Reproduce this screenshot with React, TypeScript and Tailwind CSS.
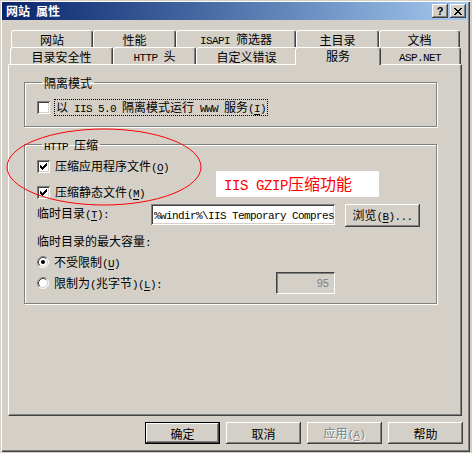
import React from 'react';
import clsx from 'clsx';

const cjkRe = /[\u2e80-\u9fff\u3000-\u303f\uff00-\uffef]/;

const cjkSm = "font-['Noto_Sans_CJK_SC',sans-serif] text-[12px]";
const monoSm = "font-['Liberation_Mono',monospace] text-[11px] tracking-[-0.6px]";
const cjkBig = "font-['Noto_Sans_CJK_SC',sans-serif] text-[16px]";
const monoBig = "font-['Liberation_Mono',monospace] text-[14px] tracking-[-0.4px]";

// "&X" underlines X, like a Windows resource string
function Txt({ t, big }: { t: string; big?: boolean }) {
  const runs: { s: string; cjk: boolean; u: boolean }[] = [];
  for (let i = 0; i < t.length; i++) {
    let c = t[i];
    let u = false;
    if (c === '&' && i + 1 < t.length) {
      i++;
      c = t[i];
      u = true;
    }
    const cjk = cjkRe.test(c);
    const last = runs[runs.length - 1];
    if (last && last.cjk === cjk && last.u === u) last.s += c;
    else runs.push({ s: c, cjk, u });
  }
  return (
    <span className="whitespace-pre">
      {runs.map((r, i) => (
        <span
          key={i}
          className={clsx(
            r.cjk ? (big ? cjkBig : cjkSm) : big ? monoBig : monoSm,
            r.u && 'underline underline-offset-[2px]'
          )}
        >
          {r.s}
        </span>
      ))}
    </span>
  );
}

const raised = 'shadow-[inset_-1px_-1px_0_#404040,inset_1px_1px_0_#ffffff,inset_-2px_-2px_0_#808080]';
const sunken = 'shadow-[inset_1px_1px_0_#808080,inset_-1px_-1px_0_#ffffff,inset_2px_2px_0_#404040,inset_-2px_-2px_0_#d4d0c8]';

function Check({ on }: { on?: boolean }) {
  return (
    <span className={`flex h-[13px] w-[13px] shrink-0 items-center justify-center bg-white ${sunken}`}>
      {on && (
        <svg width="7" height="7" viewBox="0 0 7 7" shapeRendering="crispEdges">
          {[2, 3, 4, 3, 2, 1, 0].map((y, x) => (
            <rect key={x} x={x} y={y} width="1" height="3" fill="#000" />
          ))}
        </svg>
      )}
    </span>
  );
}

function Radio({ on }: { on?: boolean }) {
  return (
    <svg width="12" height="12" viewBox="0 0 12 12" className="shrink-0">
      <circle cx="6" cy="6" r="5" fill="#fff" />
      <path d="M2.11 9.89 A5.5 5.5 0 0 1 9.89 2.11" stroke="#808080" fill="none" />
      <path d="M9.89 2.11 A5.5 5.5 0 0 1 2.11 9.89" stroke="#ffffff" fill="none" />
      <path d="M2.82 9.18 A4.5 4.5 0 0 1 9.18 2.82" stroke="#404040" fill="none" />
      <path d="M9.18 2.82 A4.5 4.5 0 0 1 2.82 9.18" stroke="#d4d0c8" fill="none" />
      {on && <circle cx="6" cy="6" r="2" fill="#000" />}
    </svg>
  );
}

function Btn({ t, def, off, w = 'w-[75px]', h = 'h-[22px]' }: { t: string; def?: boolean; off?: boolean; w?: string; h?: string }) {
  return (
    <div
      className={clsx(
        'flex shrink-0 items-center justify-center bg-[#d4d0c8]',
        w,
        h,
        def
          ? 'border border-black shadow-[inset_-1px_-1px_0_#404040,inset_1px_1px_0_#ffffff,inset_-2px_-2px_0_#808080]'
          : raised,
        off && 'text-[#808080] [text-shadow:1px_1px_0_#ffffff]'
      )}
    >
      <Txt t={t} />
    </div>
  );
}

const row1: [string, number][] = [
  ['网站', 82],
  ['性能', 83],
  ['ISAPI 筛选器', 120],
  ['主目录', 83],
  ['文档', 81],
];

const row2: [string, number, boolean][] = [
  ['目录安全性', 103, false],
  ['HTTP 头', 83, false],
  ['自定义错误', 101, false],
  ['服务', 82, true],
  ['ASP.NET', 82, false],
];

const tabEdge =
  'flex items-center justify-center rounded-t-[3px] border-t border-l border-r border-t-white border-l-white border-r-[#404040] shadow-[inset_-1px_0_0_#808080]';

function TitleBar() {
  return (
    <div className="flex h-[18px] shrink-0 items-center justify-between bg-linear-to-r from-[#0a246a] to-[#a6caf0] pl-[4px] pr-[2px]">
      <span className="font-bold text-white">
        <Txt t="网站 属性" />
      </span>
      <div className="flex gap-[2px]">
        <div className={`flex h-[14px] w-[16px] items-center justify-center bg-[#d4d0c8] ${raised}`}>
          <span className="font-['Liberation_Sans',sans-serif] text-[11px] font-bold leading-[11px]">?</span>
        </div>
        <div className={`flex h-[14px] w-[16px] items-center justify-center bg-[#d4d0c8] ${raised}`}>
          <svg width="8" height="7" viewBox="0 0 8 7" shapeRendering="crispEdges">
            {[
              [0, 0, 2], [6, 0, 2],
              [1, 1, 2], [5, 1, 2],
              [2, 2, 4],
              [3, 3, 2],
              [2, 4, 4],
              [1, 5, 2], [5, 5, 2],
              [0, 6, 2], [6, 6, 2],
            ].map(([x, y, w], i) => (
              <rect key={i} x={x} y={y} width={w} height="1" fill="#000" />
            ))}
          </svg>
        </div>
      </div>
    </div>
  );
}

const groupCls = 'w-[413px] border border-[#808080] px-[12px] shadow-[1px_1px_0_#ffffff,inset_1px_1px_0_#ffffff]';

export default function App() {
  return (
    <div className="h-[453px] w-[472px] bg-[#d4d0c8]">
      <div className="relative flex h-[452px] w-[470px] flex-col bg-[#d4d0c8] px-[2px] pt-[2px] leading-[14px] text-black shadow-[inset_1px_1px_0_#d4d0c8,inset_2px_2px_0_#ffffff,inset_-1px_-1px_0_#404040,inset_-2px_-2px_0_#808080]">
        <TitleBar />

        <div className="flex flex-col pl-[6px] pt-[10px]">
          <div className="flex h-[17px] pl-[3px]">
            {row1.map(([t, w]) => (
              <div key={t} className={`${tabEdge} pt-[1px]`} style={{ width: w }}>
                <Txt t={t} />
              </div>
            ))}
          </div>
          <div className="flex h-[17px] items-end pl-[2px]">
            {row2.map(([t, w, sel]) =>
              sel ? (
                <div
                  key={t}
                  className={`${tabEdge} relative z-10 -mx-[2px] -mb-px h-[18px] bg-[#d4d0c8] pb-[3px]`}
                  style={{ width: w + 4 }}
                >
                  <Txt t={t} />
                </div>
              ) : (
                <div key={t} className={`${tabEdge} h-[17px]`} style={{ width: w }}>
                  <Txt t={t} />
                </div>
              )
            )}
          </div>

          <div className="flex h-[352px] w-[454px] flex-col border border-t-white border-l-white border-r-[#404040] border-b-[#404040] pl-[15px] pt-[10px] shadow-[inset_-1px_-1px_0_#808080]">
            <fieldset className={`${groupCls} pb-[12px]`}>
              <legend className="ml-[5px] h-[14px] px-[2px] leading-[14px]">
                <Txt t="隔离模式" />
              </legend>
              <div className="mt-[11px] flex h-[14px] items-center gap-[4px]">
                <Check />
                <span className="border border-dotted border-black px-px leading-[12px]">
                  <Txt t="以 IIS 5.0 隔离模式运行 WWW 服务(&I)" />
                </span>
              </div>
            </fieldset>

            <fieldset className={`${groupCls} mt-[10px] pb-[9px]`}>
              <legend className="ml-[5px] h-[14px] px-[2px] leading-[14px]">
                <Txt t="HTTP 压缩" />
              </legend>
              <div className="mt-[8px] flex h-[14px] items-center gap-[5px]">
                <Check on />
                <Txt t="压缩应用程序文件(&O)" />
              </div>
              <div className="mt-[12px] flex h-[14px] items-center gap-[5px]">
                <Check on />
                <Txt t="压缩静态文件(&M)" />
              </div>

              <div className="mt-[5px] flex h-[23px] items-start">
                <span className="mt-[1px] w-[114px] shrink-0">
                  <Txt t="临时目录(&T):" />
                </span>
                <div className={`flex h-[21px] w-[184px] shrink-0 items-center overflow-hidden whitespace-nowrap bg-white pl-[3px] ${sunken}`}>
                  <Txt t={'%windir%\\IIS Temporary Compres'} />
                </div>
                <div className="ml-[10px]">
                  <Btn t="浏览(&B)..." h="h-[23px]" />
                </div>
              </div>

              <div className="mt-[6px] h-[14px]">
                <Txt t="临时目录的最大容量:" />
              </div>

              <div className="mt-[8px] flex h-[14px] items-center gap-[5px]">
                <Radio on />
                <Txt t="不受限制(&U)" />
              </div>

              <div className="mt-[3px] flex h-[22px] items-center">
                <div className="flex w-[239px] shrink-0 items-center gap-[5px]">
                  <Radio />
                  <Txt t="限制为(兆字节)(&L):" />
                </div>
                <div className="flex h-[22px] w-[59px] items-center justify-end border border-t-[#404040] border-l-[#404040] border-r-white border-b-white bg-[#d4d0c8] pr-[5px] shadow-[inset_1px_1px_0_#808080]">
                  <span className="font-['Liberation_Sans',sans-serif] text-[11px] text-[#808080]">95</span>
                </div>
              </div>
            </fieldset>
          </div>

          <div className="mt-[6px] flex w-[455px] justify-end gap-[6px]">
            <Btn t="确定" def />
            <Btn t="取消" />
            <Btn t="应用(&A)" off />
            <Btn t="帮助" />
          </div>
        </div>

        {/* red annotation drawn on top of the dialog */}
        <svg className="pointer-events-none absolute left-0 top-0" width="472" height="453">
          <ellipse cx="104" cy="167" rx="97" ry="38" fill="none" stroke="#ff0000" strokeWidth="1" />
        </svg>
        <div className="absolute left-[216px] top-[171px] flex h-[26px] w-[163px] items-center bg-white pl-[8px] leading-[18px] text-[#ff0000]">
          <Txt t="IIS GZIP压缩功能" big />
        </div>
      </div>
    </div>
  );
}
